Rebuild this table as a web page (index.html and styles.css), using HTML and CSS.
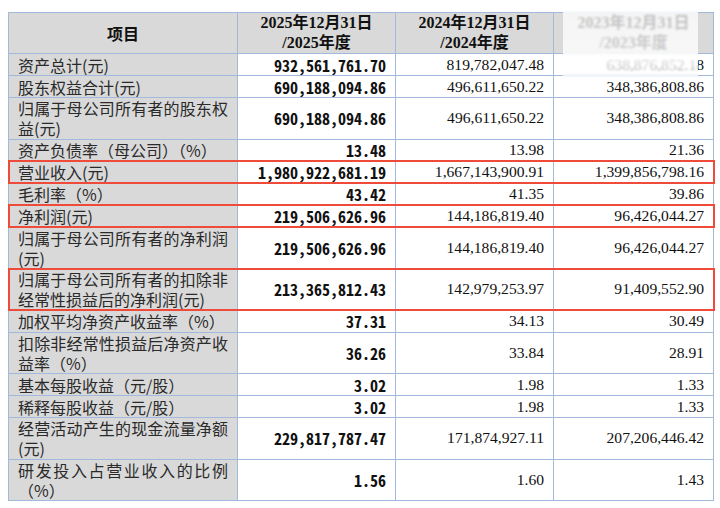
FILE: index.html
```html
<!DOCTYPE html>
<html lang="zh-CN">
<head>
<meta charset="utf-8">
<link rel="stylesheet" href="styles.css">
</head>
<body>
<div class="sheet">
<table class="fin">
  <colgroup>
    <col class="c-label"><col class="c-num"><col class="c-num"><col class="c-num4">
  </colgroup>
  <thead>
    <tr class="head">
      <th class="h-label">项目</th>
      <th>2025年12月31日<br>/2025年度</th>
      <th>2024年12月31日<br>/2024年度</th>
      <th>2023年12月31日<br>/2023年度</th>
    </tr>
  </thead>
  <tbody>
    <tr class="one"><td class="label">资产总计(元)</td><td class="cur">932,561,761.70</td><td class="num">819,782,047.48</td><td class="num">638,876,852.18</td></tr>
    <tr class="one"><td class="label">股东权益合计(元)</td><td class="cur">690,188,094.86</td><td class="num">496,611,650.22</td><td class="num">348,386,808.86</td></tr>
    <tr class="two"><td class="label">归属于母公司所有者的股东权益(元)</td><td class="cur">690,188,094.86</td><td class="num">496,611,650.22</td><td class="num">348,386,808.86</td></tr>
    <tr class="one"><td class="label">资产负债率（母公司）（%）</td><td class="cur">13.48</td><td class="num">13.98</td><td class="num">21.36</td></tr>
    <tr class="one hl"><td class="label">营业收入(元)</td><td class="cur">1,980,922,681.19</td><td class="num">1,667,143,900.91</td><td class="num">1,399,856,798.16</td></tr>
    <tr class="one"><td class="label">毛利率（%）</td><td class="cur">43.42</td><td class="num">41.35</td><td class="num">39.86</td></tr>
    <tr class="one hl"><td class="label">净利润(元)</td><td class="cur">219,506,626.96</td><td class="num">144,186,819.40</td><td class="num">96,426,044.27</td></tr>
    <tr class="two"><td class="label">归属于母公司所有者的净利润(元)</td><td class="cur">219,506,626.96</td><td class="num">144,186,819.40</td><td class="num">96,426,044.27</td></tr>
    <tr class="two hl"><td class="label">归属于母公司所有者的扣除非经常性损益后的净利润(元)</td><td class="cur">213,365,812.43</td><td class="num">142,979,253.97</td><td class="num">91,409,552.90</td></tr>
    <tr class="one"><td class="label">加权平均净资产收益率（%）</td><td class="cur">37.31</td><td class="num">34.13</td><td class="num">30.49</td></tr>
    <tr class="two"><td class="label">扣除非经常性损益后净资产收益率（%）</td><td class="cur">36.26</td><td class="num">33.84</td><td class="num">28.91</td></tr>
    <tr class="one"><td class="label">基本每股收益（元/股）</td><td class="cur">3.02</td><td class="num">1.98</td><td class="num">1.33</td></tr>
    <tr class="one"><td class="label">稀释每股收益（元/股）</td><td class="cur">3.02</td><td class="num">1.98</td><td class="num">1.33</td></tr>
    <tr class="two"><td class="label">经营活动产生的现金流量净额(元)</td><td class="cur">229,817,787.47</td><td class="num">171,874,927.11</td><td class="num">207,206,446.42</td></tr>
    <tr class="two"><td class="label">研发投入占营业收入的比例（%）</td><td class="cur">1.56</td><td class="num">1.60</td><td class="num">1.43</td></tr>
  </tbody>
</table>
<div class="fade"></div>
</div>
</body>
</html>
```
FILE: styles.css
```css
html, body {
  margin: 0;
  padding: 0;
  background: #ffffff;
}
body {
  padding: 12px 0 0 8px;
}
.sheet {
  position: relative;
  width: 705px;
}
.fin {
  border-collapse: collapse;
  table-layout: fixed;
  width: 705px;
  color: #111;
}
.c-label { width: 229px; }
.c-num { width: 158px; }
.c-num4 { width: 160px; }
.fin th, .fin td {
  border: 1px solid #a3b9dc;
  padding: 0 9px 0 9px;
  line-height: 20px;
  overflow: hidden;
}
.head { height: 41px; }
.one { height: 22px; }
.two { height: 41.5px; }
.fin th {
  background: #d9d9d9;
  font-family: "Liberation Serif", "Noto Sans CJK SC", serif;
  font-weight: bold;
  font-size: 16px;
  text-align: center;
  color: #111;
}
.fin th.h-label {
  font-family: "Noto Sans CJK SC", sans-serif;
}
.label {
  background: #d9d9d9;
  font-family: "Noto Sans CJK SC", sans-serif;
  font-size: 16px;
  text-align: justify;
  text-justify: inter-character;
  color: #2a2a2a;
  padding-right: 8px;
}
.cur {
  text-align: right;
  font-family: "Noto Sans CJK SC", sans-serif;
  font-feature-settings: "hwid" 1;
  font-weight: bold;
  font-size: 16px;
  background: #fff;
}
.num {
  text-align: right;
  font-family: "Liberation Serif", serif;
  font-size: 15.6px;
  background: #fff;
}
.hl {
  outline: 2px solid #ee4b3a;
  outline-offset: -1px;
}
.fade {
  position: absolute;
  left: 555px;
  top: -12px;
  width: 135px;
  height: 80px;
  background: linear-gradient(to bottom, rgba(255,255,255,0.72) 0%, rgba(255,255,255,0.8) 80%, rgba(255,255,255,0.4) 100%);
  backdrop-filter: blur(1.2px);
}
```
